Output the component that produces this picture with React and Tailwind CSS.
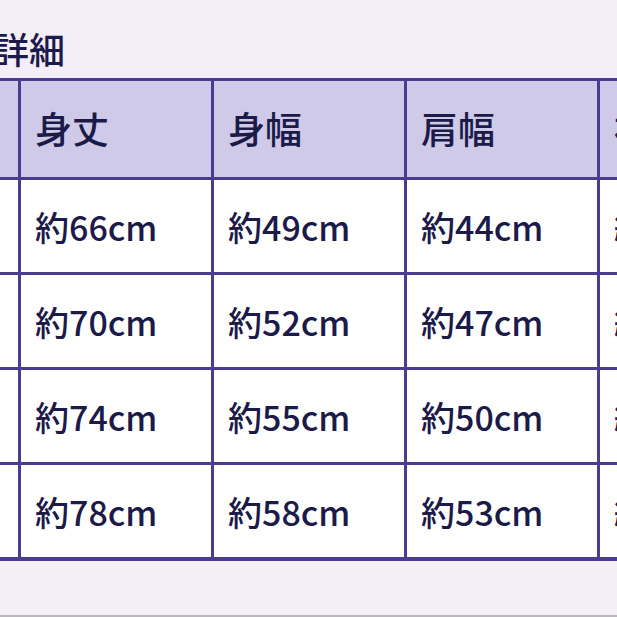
import React from "react";

const headers = ["サイズ", "身丈", "身幅", "肩幅", "袖丈"];

const rows = [
    ["S", "約66cm", "約49cm", "約44cm", "約20cm"],
    ["M", "約70cm", "約52cm", "約47cm", "約21cm"],
    ["L", "約74cm", "約55cm", "約50cm", "約22cm"],
    ["XL", "約78cm", "約58cm", "約53cm", "約23cm"],
];

export default function App() {
    return (
        <div
            className="w-[617px] h-[617px] overflow-hidden bg-[#f4eef9] text-[#1c1a48] font-medium border-b-2 border-[#b9b6c0]"
            style={{ fontFamily: '"Noto Sans CJK JP", "Noto Sans", sans-serif' }}
        >
            <div className="h-[78px] pt-[25px]">
                <p className="ml-[-7px] text-[36px] leading-[46px] whitespace-nowrap">詳細</p>
            </div>
            <div className="ml-[-172px] w-max flex flex-col border-t-[3px] border-b-[4px] border-[#4a3d8f]">
                <div className="flex bg-[#cecae8] border-b-[3px] border-[#4a3d8f]">
                    {headers.map((h) => (
                        <div
                            key={h}
                            className="w-[193px] h-[96px] flex items-center pl-[14px] border-r-[3px] border-[#4a3d8f] text-[37px]"
                        >
                            {h}
                        </div>
                    ))}
                </div>
                {rows.map((row, i) => (
                    <div
                        key={row[0]}
                        className={
                            i < rows.length - 1
                                ? "flex bg-white border-b-[3px] border-[#4a3d8f]"
                                : "flex bg-white"
                        }
                    >
                        {row.map((cell, j) => (
                            <div
                                key={j}
                                className="w-[193px] h-[92px] flex items-center pl-[14px] border-r-[3px] border-[#4a3d8f] text-[34px]"
                            >
                                {cell}
                            </div>
                        ))}
                    </div>
                ))}
            </div>
        </div>
    );
}
